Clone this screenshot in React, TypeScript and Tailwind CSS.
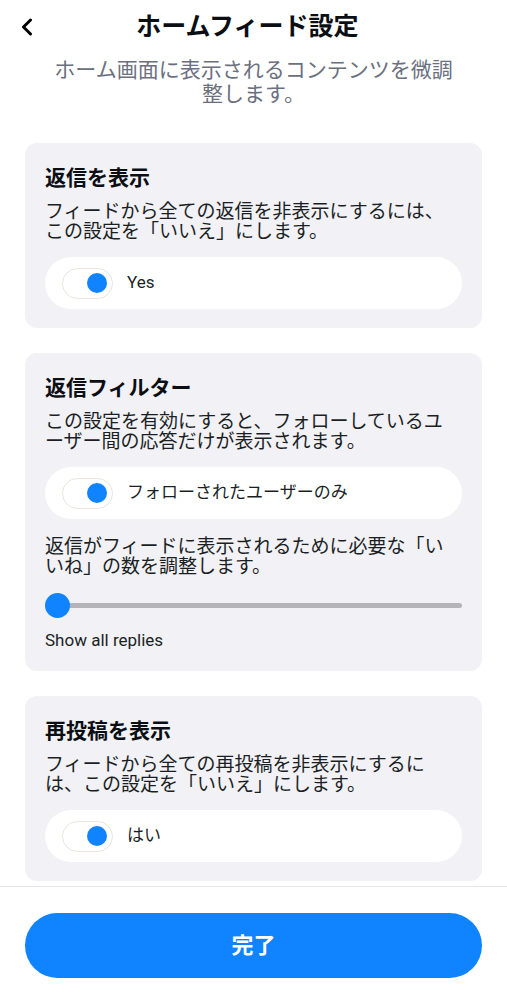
import { FC, ReactNode } from 'react';

const Toggle: FC<{ label: string }> = ({ label }) => {
    return (
        <div className="mt-[15px] flex items-center h-[52px] rounded-full bg-white pl-[17px]">
            <div className="flex items-center justify-end w-[51px] h-[31px] rounded-full border border-[#ebe4df] bg-white pr-[5px]">
                <div className="w-[20px] h-[20px] rounded-full bg-[#1083fe]" />
            </div>
            <span className="ml-[14px] text-[17px] text-[#1b1f24]">{label}</span>
        </div>
    );
};

const Card: FC<{ title: string; desc: string; children: ReactNode }> = ({ title, desc, children }) => {
    return (
        <div className="rounded-[12px] bg-[#f1f1f6] px-5 pt-5 pb-[19px]">
            <h2 className="text-[21px] font-bold leading-[30px] text-[#0b0f14]">{title}</h2>
            <p className="mt-[9px] max-w-[405px] text-[19px] leading-[20px] text-[#1b1f24]">{desc}</p>
            {children}
        </div>
    );
};

export default function App() {
    return (
        <div className="w-[507px] h-[1000px] flex flex-col bg-white font-[family-name:Roboto,'Noto_Sans_CJK_JP',sans-serif]">
            <div className="pt-[8px]">
                <div className="flex items-center h-[38px] px-[15px]">
                    <button className="w-[48px] flex items-center pl-[5px]">
                        <svg width="14" height="18" viewBox="0 0 14 18" fill="none">
                            <path d="M10.5 2 L3.5 9 L10.5 16" stroke="#000" strokeWidth="3" strokeLinecap="round" strokeLinejoin="round" />
                        </svg>
                    </button>
                    <h1 className="flex-1 text-center text-[25px] font-bold text-[#0b0f14]">ホームフィード設定</h1>
                    <div className="w-[60px]" />
                </div>
                <p className="mt-[12px] px-[48px] text-center text-[21px] leading-[24px] text-[#6b7080]">
                    ホーム画面に表示されるコンテンツを微調整します。
                </p>
            </div>

            <div className="mt-[37px] flex flex-col gap-[25px] px-[25px]">
                <Card title="返信を表示" desc="フィードから全ての返信を非表示にするには、この設定を「いいえ」にします。">
                    <Toggle label="Yes" />
                </Card>
                <Card title="返信フィルター" desc="この設定を有効にすると、フォローしているユーザー間の応答だけが表示されます。">
                    <Toggle label="フォローされたユーザーのみ" />
                    <p className="mt-[18px] max-w-[405px] text-[19px] leading-[20px] text-[#1b1f24]">
                        返信がフィードに表示されるために必要な「いいね」の数を調整します。
                    </p>
                    <div className="mt-[16px] relative flex items-center h-[25px]">
                        <div className="ml-[12px] flex-1 h-[5px] rounded-full bg-[#b5b5b9]" />
                        <div className="absolute left-0 top-0 w-[25px] h-[25px] rounded-full bg-[#1083fe]" />
                    </div>
                    <p className="mt-[12px] mb-[2px] text-[17px] leading-[20px] text-[#1b1f24]">Show all replies</p>
                </Card>
                <Card title="再投稿を表示" desc="フィードから全ての再投稿を非表示にするには、この設定を「いいえ」にします。">
                    <Toggle label="はい" />
                </Card>
            </div>

            <div className="mt-[5px] border-t border-[#e6e6ea] px-[25px] pt-[26px]">
                <button className="w-full h-[65px] rounded-full bg-[#1083fe] text-white text-[22px] font-bold">
                    完了
                </button>
            </div>
        </div>
    );
}
